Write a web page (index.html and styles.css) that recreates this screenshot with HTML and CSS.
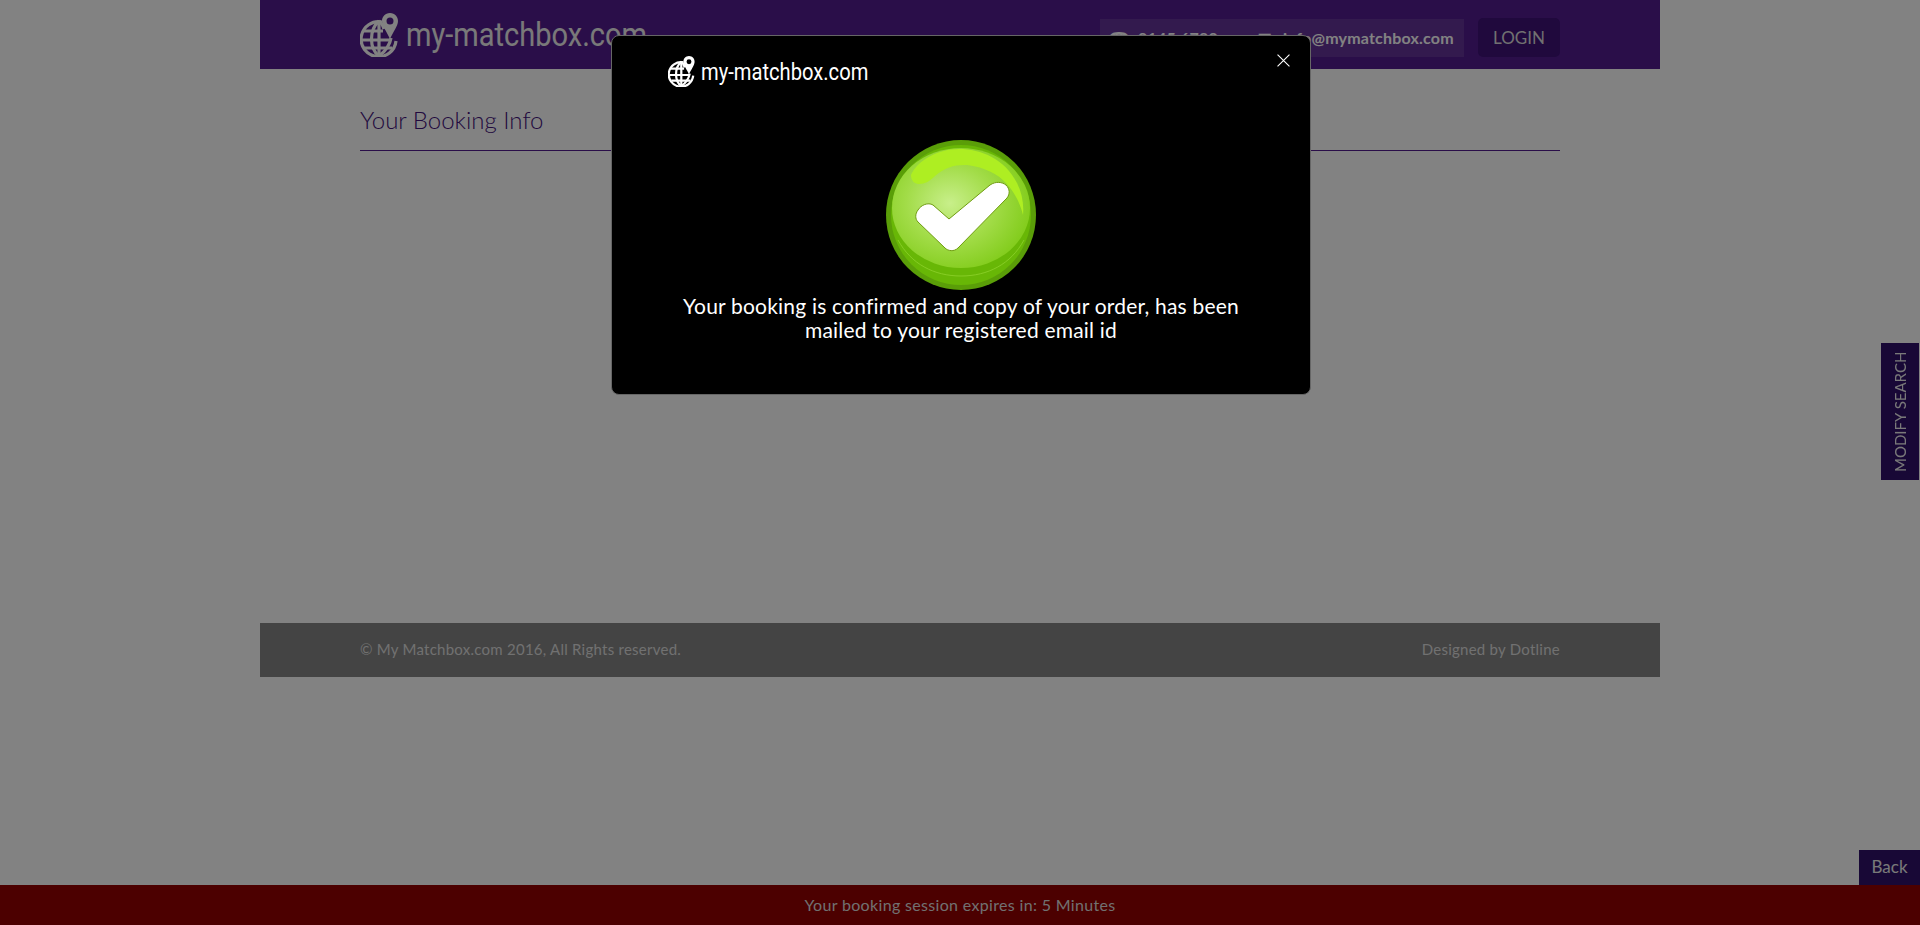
FILE: index.html
```html
<!DOCTYPE html>
<html lang="en">
<head>
<meta charset="utf-8">
<title>Your Booking Info</title>
<link rel="stylesheet" href="styles.css">
</head>
<body>
<div class="page">
  <header class="header">
    <div class="inner header-row">
      <a class="logo">
        <svg class="globe globe-lg" viewBox="0 0 40 44"><use href="#globe"/></svg>
        <span class="logo-text">my-matchbox.com</span>
      </a>
      <div class="header-right">
        <div class="contact"><span class="phone-icon">&#9742;</span><span class="phone">0145 6780</span><span class="mail-icon">&#9993;</span><span class="mail">info@mymatchbox.com</span></div>
        <button class="login">LOGIN</button>
      </div>
    </div>
  </header>
  <main class="inner content">
    <h1 class="title">Your Booking Info</h1>
  </main>
  <footer class="footer">
    <div class="inner footer-row">
      <span>© My Matchbox.com 2016, All Rights reserved.</span>
      <span>Designed by Dotline</span>
    </div>
  </footer>
</div>
<a class="modify">MODIFY SEARCH</a>
<a class="back">Back</a>
<div class="session">Your booking session expires in: 5 Minutes</div>
<div class="backdrop"></div>
<div class="modal">
  <div class="modal-logo">
    <svg class="globe globe-sm" viewBox="0 0 40 44"><use href="#globe"/></svg>
    <span class="modal-logo-text">my-matchbox.com</span>
  </div>
  <svg class="close" viewBox="0 0 12 12"><path d="M.5.5l11 11M11.500.5l-11 11"/></svg>
  <svg class="tick" viewBox="0 0 150 150">
    <defs>
      <radialGradient id="body" cx="42%" cy="46%" r="58%">
        <stop offset="0" stop-color="#c8ef8a"/>
        <stop offset=".55" stop-color="#a2dc48"/>
        <stop offset="1" stop-color="#84cd1e"/>
      </radialGradient>
    </defs>
    <circle cx="75" cy="75" r="75" fill="#5a9e08"/>
    <circle cx="75" cy="75" r="70" fill="#68b706"/>
    <ellipse cx="75" cy="68" rx="69" ry="60" fill="url(#body)"/>
    <path d="M12 100C25 124 48 136 75 136s50-12 63-36" fill="none" stroke="#8ed22c" stroke-width=".8"/>
    <path d="M25 35C32 20 52 9 73 9c22 0 46 10 58 34 5 10 7 21 6 32-5-20-17-36-32-43C94 27 86 25 78 25c-10 0-20 3-29 11-5 5-10 8-16 8-5 0-8-4-8-9Z" fill="#aeee22"/>
    <path d="M32 70c3-5 10-8 15-5L63 79l41-34c6-4 12-3 16 0 4 4 4 9 1 13L72 108c-4 4-10 3-13 0L32 82c-3-3-3-8 0-12Z" fill="#fff" stroke="#6f9c10" stroke-width="1"/>
  </svg>
  <p class="message">Your booking is confirmed and copy of your order, has been<br>mailed to your registered email id</p>
</div>
<svg class="defs" aria-hidden="true">
  <symbol id="globe" viewBox="0 0 40 44">
    <g fill="none" stroke="currentColor" stroke-width="3.200">
      <path d="M22 9A17.500 17.500 0 1 0 36 28"/>
      <path d="M19 8c-10 9-10 27 0 35M19 8c3 2 4 5 5 8M19 43c8-6 11-12 12-18"/>
      <path d="M19 8v35M3 18h20M2 27h29M5 35h27"/>
    </g>
    <path d="M30 0c-5 0-8 4-8 8 0 5 5 11 8 18 3-7 8-13 8-18 0-4-3-8-8-8Zm0 4.500a3.500 3.500 0 1 1 0 7 3.500 3.500 0 0 1 0-7Z" fill="currentColor" fill-rule="evenodd"/>
  </symbol>
</svg>
</body>
</html>
```
FILE: styles.css
```css
* { box-sizing: border-box; }
html, body { height: 925px; }
body {
  margin: 0;
  background: #fff;
  color: #888;
  font-family: "Lato", "Open Sans", sans-serif;
  overflow: hidden;
}
.defs { position: absolute; width: 0; height: 0; }
.page { width: 1400px; margin: 0 auto; }
.inner { width: 1200px; margin: 0 auto; }
.header { background: #541d8f; height: 69px; }
.header-row { display: flex; justify-content: space-between; align-items: center; height: 100%; }
.logo { display: flex; align-items: center; gap: 6px; color: #fff; }
.globe { display: block; }
.globe-lg { width: 40px; height: 44px; }
.globe-sm { width: 28px; height: 31px; }
.logo-text {
  font: 400 33px "Roboto", sans-serif;
  color: #eee;
  transform: scaleX(.88);
  transform-origin: left center;
}
.header-right { display: flex; align-items: center; gap: 14px; margin-top: 6px; }
.contact {
  display: flex;
  align-items: center;
  height: 38px;
  width: 364px;
  padding-left: 9px;
  background: rgba(255,255,255,.1);
  color: #fff;
  font-size: 16px;
  font-weight: 700;
  letter-spacing: .2px;
}
.phone-icon { width: 29px; }
.phone { width: 120px; }
.mail-icon { width: 25px; }
.login {
  width: 82px;
  height: 39px;
  border: 0;
  border-radius: 5px;
  background: #3f1278;
  color: #ddd;
  font: 400 17px "Lato", sans-serif;
}
.content { height: 554px; padding-top: 31px; }
.title {
  margin: 0;
  height: 51px;
  padding-top: 5px;
  border-bottom: 1px solid #541d8f;
  color: #44127c;
  font-size: 24px;
  font-weight: 300;
  line-height: 29px;
}
.footer { background: #868686; height: 54px; }
.footer-row { display: flex; justify-content: space-between; align-items: center; height: 100%; padding-bottom: 2px; color: #ddd; font-size: 15px; letter-spacing: .25px; }
.modify {
  position: fixed;
  right: 1px;
  top: 343px;
  width: 38px;
  height: 137px;
  background: #30116a;
  color: #eee;
  font-size: 15px;
  writing-mode: vertical-rl;
  transform: rotate(180deg);
  display: flex;
  align-items: center;
  justify-content: center;
}
.back {
  position: fixed;
  right: 0;
  top: 850px;
  width: 61px;
  height: 35px;
  padding-bottom: 2px;
  background: #30116a;
  color: #eee;
  font-size: 17px;
  display: flex;
  align-items: center;
  justify-content: center;
}
.session {
  position: fixed;
  left: 0;
  right: 0;
  top: 885px;
  height: 40px;
  padding-bottom: 2px;
  background: #960000;
  color: #ddd;
  font-size: 16px;
  letter-spacing: .33px;
  display: flex;
  align-items: center;
  justify-content: center;
}
.backdrop { position: fixed; inset: 0; background: rgba(0,0,0,.49); }
.modal {
  position: fixed;
  left: 611px;
  top: 35px;
  width: 700px;
  height: 360px;
  background: #000;
  border: 1px solid #666;
  border-radius: 8px;
  color: #fff;
  display: flex;
  flex-direction: column;
  align-items: center;
}
.modal-logo {
  align-self: flex-start;
  display: flex;
  align-items: center;
  gap: 5px;
  margin: 20px 0 0 56px;
  height: 31px;
}
.modal-logo-text {
  font: 400 24px "Roboto", sans-serif;
  transform: scaleX(.84);
  transform-origin: left center;
}
.close {
  position: absolute;
  right: 20px;
  top: 18px;
  width: 13px;
  height: 13px;
  fill: none;
  stroke: #fff;
  stroke-width: 1;
}
.tick { width: 150px; height: 150px; margin-top: 53px; }
.message {
  margin: 4px 0 0;
  text-align: center;
  font-size: 21px;
  font-weight: 400;
  line-height: 24px;
  letter-spacing: .2px;
}
```
